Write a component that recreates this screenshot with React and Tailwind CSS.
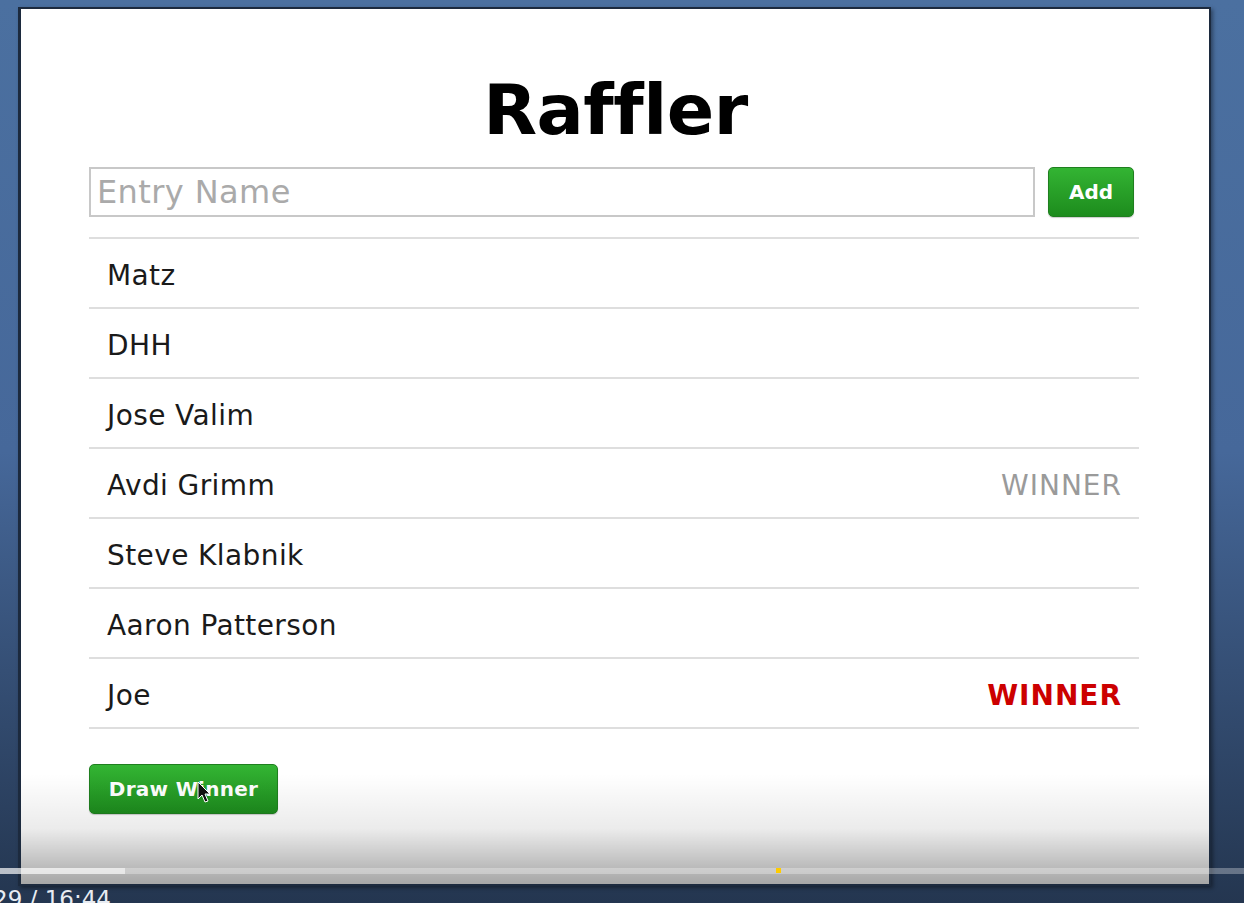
export default function App() {
  const entries = [
    { name: "Matz" },
    { name: "DHH" },
    { name: "Jose Valim" },
    { name: "Avdi Grimm", winner: "old" },
    { name: "Steve Klabnik" },
    { name: "Aaron Patterson" },
    { name: "Joe", winner: "new" },
  ];
  const font = { fontFamily: '"DejaVu Sans", Verdana, sans-serif' };
  return (
    <div
      className="relative w-[1244px] h-[903px] overflow-hidden bg-gradient-to-b from-[#4b70a0] via-[#46689a] to-[#243650]"
      style={font}
    >
      <div className="absolute left-[18px] top-[7px] w-[1193px] h-[879px] bg-white border-l-[3px] border-t-[2px] border-r-[2px] border-b-[2px] border-[#1c2a3e] shadow-[2px_2px_4px_rgba(0,0,0,0.4)]">
        <div className="flex flex-col pl-[68px] w-[1121px]">
          <h1 className="mt-[58px] text-center text-[70px] leading-[86px] font-bold text-black tracking-[-0.5px]">
            Raffler
          </h1>
          <div className="flex items-center mt-[14px] h-[50px]">
            <div className="w-[946px] h-[50px] border-2 border-[#c8c8c8] bg-white flex items-center px-[6px]">
              <span className="text-[32px] tracking-[0.4px] text-[#aaaaaa]">Entry Name</span>
            </div>
            <button className="ml-[13px] w-[86px] h-[50px] rounded-[5px] bg-gradient-to-b from-[#33b433] to-[#1d8c1d] border border-[#1f7f1f] text-white font-bold text-[20px] shadow-[0_1px_1px_rgba(0,0,0,0.2)]">
              Add
            </button>
          </div>
          <ul className="mt-[20px] w-[1050px] border-t-2 border-[#dedede]">
            {entries.map((e) => (
              <li
                key={e.name}
                className="h-[70px] border-b-2 border-[#dedede] flex items-center justify-between pt-[6px] pl-[18px] pr-[17px]"
              >
                <span className="text-[28px] tracking-[0.4px] text-[#1a1a1a]">{e.name}</span>
                {e.winner === "old" && (
                  <span className="text-[28px] tracking-[1px] text-[#9a9a9a]">WINNER</span>
                )}
                {e.winner === "new" && (
                  <span className="text-[28px] tracking-[1px] font-bold text-[#cc0000]">WINNER</span>
                )}
              </li>
            ))}
          </ul>
          <div className="mt-[35px]">
            <button className="w-[189px] h-[50px] rounded-[5px] bg-gradient-to-b from-[#33b433] to-[#1d8c1d] border border-[#1f7f1f] text-white font-bold text-[20px] tracking-[0.3px] shadow-[0_1px_1px_rgba(0,0,0,0.2)]">
              Draw Winner
            </button>
          </div>
        </div>
        <div className="absolute left-0 right-0 bottom-0 h-[110px] bg-gradient-to-b from-[rgba(0,0,0,0)] via-[rgba(0,0,0,0.08)] to-[rgba(0,0,0,0.35)]" />
      </div>
      <div className="absolute left-0 top-[868px] w-[1244px] h-[6px] bg-[rgba(255,255,255,0.3)]">
        <div className="w-[125px] h-full bg-[rgba(255,255,255,0.55)]" />
        <div className="absolute left-[776px] top-0 w-[5px] h-[5px] bg-[#ffcc00]" />
      </div>
      <div className="absolute left-[-7px] top-[886px] text-[23px] leading-[26px] text-[#e8ecf2]">
        29 / 16:44
      </div>
      {/* cursor */}
      <svg className="absolute left-[197px] top-[781px]" width="16" height="24" viewBox="0 0 16 24">
        <path d="M1 1 L1 18 L5 14 L8 21 L11 20 L8 13 L13 13 Z" fill="#111" stroke="#fff" strokeWidth="1" />
      </svg>
    </div>
  );
}
